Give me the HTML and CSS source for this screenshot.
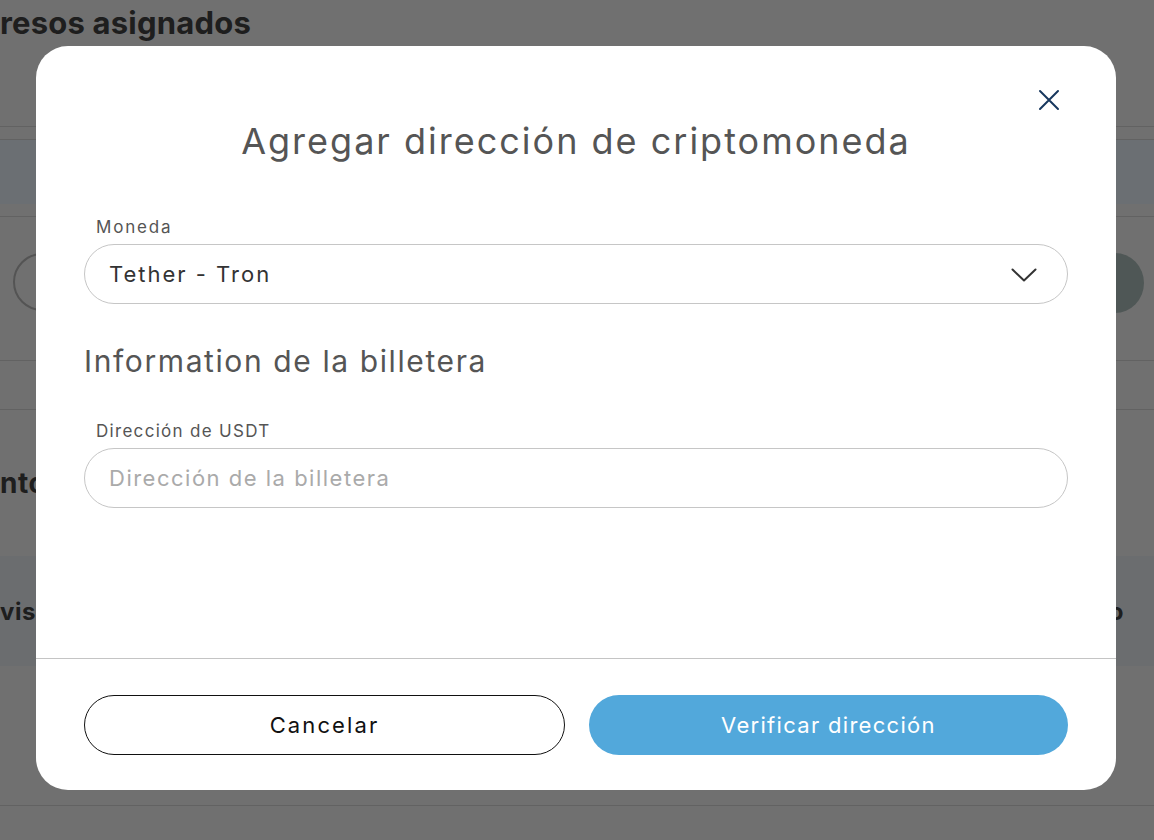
FILE: index.html
```html
<!DOCTYPE html>
<html lang="es">
<head>
<meta charset="utf-8">
<title>Agregar dirección de criptomoneda</title>
<link rel="stylesheet" href="styles.css">
</head>
<body>
<div class="page">
  <header class="page-head">
    <h1 class="page-title">resos asignados</h1>
  </header>
  <div class="tabs-band"></div>
  <div class="filter-row">
    <div class="filter-pill"></div>
    <div class="filter-circle"></div>
  </div>
  <div class="thin-row"></div>
  <h2 class="section-title">ntos</h2>
  <div class="table-head">
    <span class="th-left">visa</span>
    <span class="th-right">o</span>
  </div>
  <div class="table-body"></div>
</div>

<div class="overlay">
  <div class="modal" role="dialog" aria-labelledby="modal-title">
    <div class="modal-body">
      <button class="close" aria-label="Cerrar">
        <svg width="22" height="22" viewBox="0 0 22 22"><path d="M2 2 L20 20 M20 2 L2 20" stroke="#17375e" stroke-width="2" stroke-linecap="round" fill="none"/></svg>
      </button>
      <h2 id="modal-title" class="modal-title">Agregar dirección de criptomoneda</h2>

      <div class="field">
        <label class="field-label">Moneda</label>
        <div class="select">
          <span class="select-value">Tether - Tron</span>
          <svg class="chev" width="26" height="14" viewBox="0 0 26 14"><path d="M1.5 1.5 L13 12.5 L24.5 1.5" stroke="#333" stroke-width="2" fill="none" stroke-linecap="round" stroke-linejoin="round"/></svg>
        </div>
      </div>

      <h3 class="sub-title">Information de la billetera</h3>

      <div class="field">
        <label class="field-label label-usdt">Dirección de USDT</label>
        <div class="input"><span class="placeholder">Dirección de la billetera</span></div>
      </div>
    </div>
    <div class="modal-foot">
      <button class="btn btn-outline">Cancelar</button>
      <button class="btn btn-primary">Verificar dirección</button>
    </div>
  </div>
</div>
</body>
</html>
```

FILE: styles.css
```css
* { box-sizing: border-box; }
html, body { margin: 0; padding: 0; }
body {
  width: 1154px;
  height: 840px;
  overflow: hidden;
  font-family: "Inter", "Liberation Sans", sans-serif;
  background: #e0e0e0;
  position: relative;
}

/* background page */
.page { width: 1154px; height: 840px; overflow: hidden; }
.page-head { height: 127px; border-bottom: 1px solid #c4c4c4; }
.page-title {
  margin: 0;
  padding-top: 4px;
  font-size: 31px;
  font-weight: 700;
  color: #3c3c3c;
  line-height: 38px;
  letter-spacing: 0.2px;
}
.tabs-band {
  margin-top: 12px;
  height: 65px;
  background: #d6dee6;
  border-top: 1px solid #c4c4c4;
}
.filter-row {
  margin-top: 12px;
  height: 145px;
  border-top: 1px solid #c4c4c4;
  border-bottom: 1px solid #c4c4c4;
  display: flex;
  justify-content: space-between;
  align-items: flex-start;
  padding: 36px 10px 0 13px;
}
.filter-pill {
  width: 200px; height: 58px;
  border: 2px solid #a8a8a8;
  border-radius: 30px;
}
.filter-circle {
  width: 58px; height: 60px;
  border-radius: 50%;
  background: #9eaeac;
}
.thin-row { height: 49px; border-bottom: 1px solid #c4c4c4; }
.section-title {
  margin: 56px 0 0 0;
  font-size: 28px;
  font-weight: 700;
  color: #3c3c3c;
  line-height: 34px;
  letter-spacing: 0.6px;
}
.table-head {
  margin-top: 56px;
  height: 110px;
  background: #d6dadf;
  display: flex;
  justify-content: space-between;
  align-items: center;
  padding: 0 30px 0 0;
  font-size: 24px;
  font-weight: 700;
  color: #3c3c3c;
  letter-spacing: 0.6px;
}
.table-body { height: 140px; border-bottom: 1px solid #c4c4c4; }

/* overlay & modal */
.overlay {
  position: absolute;
  inset: 0;
  background: rgba(0, 0, 0, 0.5);
}
.modal {
  position: absolute;
  left: 36px;
  top: 46px;
  width: 1080px;
  height: 744px;
  background: #fff;
  border-radius: 32px;
  display: flex;
  flex-direction: column;
}
.modal-body {
  position: relative;
  flex: 1;
  padding: 74px 48px 0 48px;
  border-bottom: 1px solid #c4c4c4;
}
.close {
  position: absolute;
  top: 41px;
  right: 54px;
  width: 26px; height: 26px;
  padding: 2px;
  border: 0;
  background: transparent;
  display: flex;
}
.modal-title {
  margin: 0;
  text-align: center;
  font-size: 36px;
  font-weight: 400;
  color: #555;
  line-height: 42px;
  letter-spacing: 2px;
}
.field { display: flex; flex-direction: column; }
.modal-title + .field { margin-top: 55px; }
.field-label {
  padding-left: 12px;
  font-size: 17px;
  color: #555;
  line-height: 20px;
  letter-spacing: 1.8px;
  margin-bottom: 7px;
}
.label-usdt { letter-spacing: 1.3px; }
.select, .input {
  height: 60px;
  border: 1px solid #c6c6c6;
  border-radius: 30px;
  display: flex;
  align-items: center;
  justify-content: space-between;
  padding: 0 30px 0 24px;
}
.select-value {
  font-size: 22px;
  color: #333;
  letter-spacing: 2px;
}
.chev { margin-top: 2px; }
.placeholder {
  font-size: 22px;
  color: #aaa;
  letter-spacing: 1.5px;
}
.sub-title {
  margin: 39px 0 0 0;
  font-size: 30px;
  font-weight: 400;
  color: #555;
  line-height: 36px;
  letter-spacing: 1.6px;
}
.sub-title + .field { margin-top: 42px; }

.modal-foot {
  height: 131px;
  padding: 36px 48px 0 48px;
  display: flex;
  gap: 24px;
}
.btn {
  flex: 1;
  height: 60px;
  border-radius: 30px;
  font-family: inherit;
  font-size: 22px;
  cursor: pointer;
}
.btn-outline { background: #fff; border: 1px solid #111; color: #111; letter-spacing: 2.1px; }
.btn-primary { background: #52a8db; border: 0; color: #fff; letter-spacing: 1.3px; }
```
